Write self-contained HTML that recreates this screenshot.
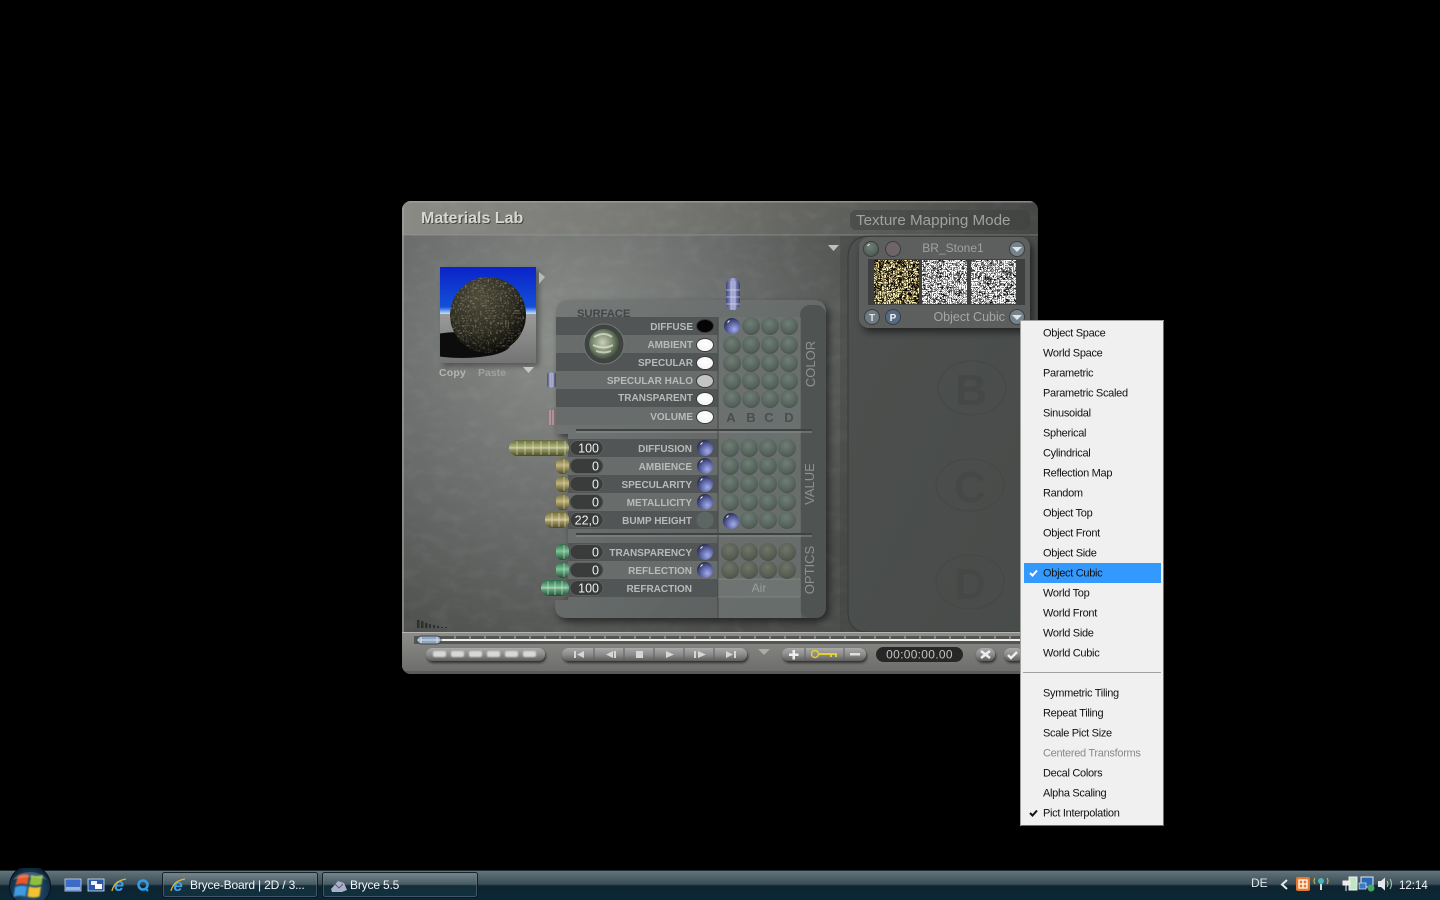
<!DOCTYPE html>
<html><head><meta charset="utf-8"><title>Bryce 5.5</title>
<style>html,body{margin:0;padding:0;background:#000;width:1440px;height:900px;overflow:hidden}svg{display:block}
text{font-family:"Liberation Sans",sans-serif}
.l{font-weight:bold;font-size:10px;fill:#b8bbb9;text-anchor:end}
.n{font-size:12.5px;fill:#f0f0f0;text-anchor:end}
.m{font-size:11px;letter-spacing:-.3px;fill:#111}
.t{font-size:12px;letter-spacing:-.17px;fill:#f2f6f8}
</style></head><body>
<svg width="1440" height="900" viewBox="0 0 1440 900" xmlns="http://www.w3.org/2000/svg">
<defs>
<radialGradient id="body" gradientUnits="userSpaceOnUse" cx="560" cy="340" r="340"><stop offset="0" stop-color="#8b8e8b"/><stop offset=".5" stop-color="#6c6f6d"/><stop offset="1" stop-color="#4c4e4c"/></radialGradient>
<linearGradient id="head" x1="0" x2="1" y1="0" y2="0"><stop offset="0" stop-color="#8a8a85"/><stop offset=".4" stop-color="#777874"/><stop offset="1" stop-color="#454744"/></linearGradient>
<linearGradient id="surf" x1="0" x2="1" y1="0" y2="1"><stop offset="0" stop-color="#757978"/><stop offset="1" stop-color="#585c5b"/></linearGradient>
<linearGradient id="rp" x1="0" x2="1" y1="0" y2="1"><stop offset="0" stop-color="#4d504e"/><stop offset="1" stop-color="#484b49"/></linearGradient>
<linearGradient id="bar" x1="0" x2="0" y1="0" y2="1"><stop offset="0" stop-color="#8d8d8a"/><stop offset="1" stop-color="#6b6b69"/></linearGradient>
<linearGradient id="cap" x1="0" x2="0" y1="0" y2="1"><stop offset="0" stop-color="#a9aaa9"/><stop offset=".5" stop-color="#8b8c8b"/><stop offset="1" stop-color="#5d5e5d"/></linearGradient>
<linearGradient id="sky" x1="0" x2="0" y1="0" y2="1"><stop offset="0" stop-color="#0a23c8"/><stop offset=".85" stop-color="#1450d8"/><stop offset="1" stop-color="#bfe4ff"/></linearGradient>
<linearGradient id="gnd" x1="0" x2="0" y1="0" y2="1"><stop offset="0" stop-color="#9a9a9a"/><stop offset="1" stop-color="#747474"/></linearGradient>
<radialGradient id="sph" cx=".38" cy=".28" r=".8"><stop offset="0" stop-color="#4e4b3a"/><stop offset=".55" stop-color="#2e2d22"/><stop offset="1" stop-color="#040403"/></radialGradient>
<radialGradient id="sd" cx=".45" cy=".35" r=".7"><stop offset="0" stop-color="#6f7e76"/><stop offset=".7" stop-color="#56635c"/><stop offset="1" stop-color="#484f4c"/></radialGradient>
<radialGradient id="sd2" cx=".45" cy=".35" r=".7"><stop offset="0" stop-color="#70756a"/><stop offset=".7" stop-color="#585c52"/><stop offset="1" stop-color="#494c45"/></radialGradient>
<radialGradient id="bd" cx=".65" cy=".7" r=".8"><stop offset="0" stop-color="#a3acea"/><stop offset=".55" stop-color="#565e9c"/><stop offset="1" stop-color="#1d2036"/></radialGradient>
<radialGradient id="wh" cx=".5" cy=".4" r=".7"><stop offset="0" stop-color="#fff"/><stop offset=".8" stop-color="#f4f4f4"/><stop offset="1" stop-color="#bbb"/></radialGradient>
<radialGradient id="gb" cx=".45" cy=".45" r=".6"><stop offset="0" stop-color="#c9d0b8"/><stop offset=".55" stop-color="#7c8c70"/><stop offset="1" stop-color="#344034"/></radialGradient>
<linearGradient id="gold" x1="0" x2="0" y1="0" y2="1"><stop offset="0" stop-color="#6f6a3a"/><stop offset=".45" stop-color="#c2b67c"/><stop offset="1" stop-color="#4d4824"/></linearGradient>
<linearGradient id="green" x1="0" x2="0" y1="0" y2="1"><stop offset="0" stop-color="#2c6a46"/><stop offset=".45" stop-color="#7cc49a"/><stop offset="1" stop-color="#1f4c32"/></linearGradient>
<linearGradient id="olive" x1="0" x2="0" y1="0" y2="1"><stop offset="0" stop-color="#62683a"/><stop offset=".45" stop-color="#b5b97e"/><stop offset="1" stop-color="#474a22"/></linearGradient>
<linearGradient id="bluec" x1="0" x2="1" y1="0" y2="0"><stop offset="0" stop-color="#3f4678"/><stop offset=".5" stop-color="#a9aee0"/><stop offset="1" stop-color="#3b3f6a"/></linearGradient>
<linearGradient id="tb" x1="0" x2="0" y1="0" y2="1"><stop offset="0" stop-color="#6e7f85"/><stop offset=".1" stop-color="#5b6d74"/><stop offset=".47" stop-color="#3a4e58"/><stop offset=".53" stop-color="#0e2430"/><stop offset="1" stop-color="#0b2735"/></linearGradient>
<linearGradient id="tbb" x1="0" x2="0" y1="0" y2="1"><stop offset="0" stop-color="#7d8d92"/><stop offset=".48" stop-color="#4a5c65"/><stop offset=".52" stop-color="#16303c"/><stop offset="1" stop-color="#123242"/></linearGradient>
<radialGradient id="orb" cx=".5" cy=".6" r=".6"><stop offset="0" stop-color="#2f5a7c"/><stop offset=".8" stop-color="#12324a"/><stop offset="1" stop-color="#0a1a26"/></radialGradient>
<filter id="stone" x="0" y="0" width="100%" height="100%"><feTurbulence type="fractalNoise" baseFrequency=".06 .09" numOctaves="4" seed="7"/><feColorMatrix values="0 0 0 0 1  0 0 0 0 1  0 0 0 0 1  1.6 0 0 0 -.72"/></filter>
<filter id="tex1" x="0" y="0" width="100%" height="100%"><feTurbulence type="turbulence" baseFrequency=".45" numOctaves="2" seed="3"/><feColorMatrix values="4 0 0 0 -.72  3.500 0 0 0 -.65  1.800 0 0 0 -.36  0 0 0 0 1"/></filter>
<filter id="tex2" x="0" y="0" width="100%" height="100%"><feTurbulence type="turbulence" baseFrequency=".5" numOctaves="2" seed="3"/><feColorMatrix values="9 0 0 0 -1.4  9 0 0 0 -1.4  9 0 0 0 -1.4  0 0 0 0 1"/></filter>
<filter id="spk" x="0" y="0" width="100%" height="100%"><feTurbulence type="turbulence" baseFrequency=".4" numOctaves="2" seed="5"/><feColorMatrix values="0 0 0 0 .85  0 0 0 0 .8  0 0 0 0 .55  3 0 0 0 -.75"/></filter>
<filter id="sh" x="-10%" y="-10%" width="125%" height="125%"><feDropShadow dx="3" dy="4" stdDeviation="4" flood-color="#000" flood-opacity=".55"/></filter>
<filter id="sh2" x="-10%" y="-30%" width="125%" height="180%"><feDropShadow dx="1" dy="2" stdDeviation="1.2" flood-color="#000" flood-opacity=".6"/></filter>
<filter id="blur"><feGaussianBlur stdDeviation="3"/></filter>
<filter id="soft"><feGaussianBlur stdDeviation=".7"/></filter>
<clipPath id="pc"><rect x="402" y="201" width="636" height="473" rx="9"/></clipPath>
<clipPath id="sc"><rect x="440" y="267" width="96" height="96"/></clipPath>
<clipPath id="sphc"><circle cx="488" cy="315" r="38"/></clipPath>
<clipPath id="orbc"><rect x="0" y="868" width="60" height="32"/></clipPath>
<g id="s"><circle r="9" fill="url(#sd)"/></g>
<g id="o"><circle r="9" fill="url(#sd2)"/></g>
<g id="b"><circle r="8" fill="url(#bd)"/><path d="M-4.500-3.500-2.500-5.500" stroke="#fff" stroke-width="1"/></g>
<g id="w"><ellipse rx="8.500" ry="6.500" fill="url(#wh)" stroke="#3a3c3b"/></g>
<g id="f"><rect x="-33" y="-7.500" width="33" height="15" rx="7.500" fill="#3a3c3c" stroke="#5e605f"/></g>
<g id="ib"><circle r="7.500" fill="url(#sd)" stroke="#3a3e3c"/><path d="M-3.500-3-1.500-5" stroke="#fff"/></g>
</defs>

<rect width="1440" height="900" fill="#000"/>

<!-- window -->
<g clip-path="url(#pc)">
<rect x="402" y="201" width="636" height="473" fill="url(#body)"/>
<rect x="402" y="201" width="636" height="473" filter="url(#stone)" opacity=".07"/>
<rect x="402" y="201" width="636" height="34" fill="url(#head)"/>
<rect x="402" y="201" width="636" height="34" filter="url(#stone)" opacity=".07"/>
<rect x="402" y="201" width="636" height="1.500" fill="#a5a5a2" opacity=".7"/>
<rect x="402" y="234.500" width="636" height="1" fill="#9a9c99" opacity=".6"/>
<rect x="402" y="201" width="2" height="473" fill="#a3a4a1" opacity=".6"/>
<rect x="840" y="236" width="198" height="400" fill="#3f413f" opacity=".35"/>
<!-- right panel -->
<path d="M1038 236H870Q848 236 848 258V612Q848 632 868 632H1038Z" fill="url(#rp)" stroke="#383a39"/>
<!-- embossed letters -->
<g fill="none" stroke="#444745" stroke-width="1"><ellipse cx="972" cy="388" rx="34" ry="27"/><ellipse cx="970" cy="485" rx="34" ry="26"/><ellipse cx="970" cy="582" rx="34" ry="27"/></g>
<g font-size="44" font-weight="bold" fill="#454846" text-anchor="middle"><text x="971" y="405">B</text><text x="970" y="502">C</text><text x="970" y="599">D</text></g>
<!-- bottom bar -->
<rect x="402" y="632" width="636" height="42" fill="url(#bar)"/>
<rect x="402" y="632" width="636" height="1" fill="#b4b4b0"/>
<rect x="402" y="671" width="636" height="3" fill="#5a5a58"/>
</g>

<!-- title -->
<text x="421" y="223" font-size="16" font-weight="bold" fill="#2a2a28" opacity=".7" transform="translate(1 1)">Materials Lab</text>
<text x="421" y="223" font-size="16" font-weight="bold" fill="#d8d8d2">Materials Lab</text>
<rect x="850" y="210" width="180" height="20" rx="6" fill="#3f413f" opacity=".55"/>
<text x="856" y="225" font-size="15.200" fill="#a0a29e">Texture Mapping Mode</text>
<path d="M828 245h11l-5.500 6z" fill="#bfc1bd"/>

<!-- preview -->
<rect x="443" y="270" width="96" height="96" fill="#000" opacity=".35" filter="url(#blur)"/>
<g clip-path="url(#sc)">
<rect x="440" y="267" width="96" height="47" fill="url(#sky)"/>
<rect x="440" y="314" width="96" height="49" fill="url(#gnd)"/>
<ellipse cx="462" cy="345" rx="48" ry="13" fill="#0c0c0c"/>
</g>
<circle cx="488" cy="315" r="38" fill="url(#sph)"/>
<rect x="450" y="277" width="76" height="76" filter="url(#spk)" clip-path="url(#sphc)" opacity=".3"/>
<path d="M539 272l6 5-6 7z" fill="#b8bab6"/>
<path d="M523 367h11l-5.500 6z" fill="#c6c8c4"/>
<text x="439" y="376" font-size="10.500" font-weight="bold" fill="#b4b6b2" letter-spacing=".2">Copy</text>
<text x="478" y="376" font-size="10.500" font-weight="bold" fill="#a0a29e">Paste</text>

<!-- small knobs -->
<rect x="547" y="372" width="9" height="16" rx="3" fill="url(#bluec)" opacity=".8"/>
<rect x="547" y="409" width="9" height="17" rx="3" fill="#8f7478"/>
<path d="M550 373v14M553 373v14M550 410v15M553 410v15" stroke="#ddd" stroke-width=".7"/>

<!-- surface panel with notch on the left for sliders -->
<path d="M569 300H813Q826 300 826 313V605Q826 618 813 618H568Q555 618 555 606V600H568V434H556V313Q556 300 569 300Z" fill="url(#surf)" filter="url(#sh)"/>
<rect x="800" y="305" width="26" height="313" rx="10" fill="#4f5352"/>
<rect x="718" y="317" width="83" height="301" fill="#6f7674" opacity=".6"/>
<!-- rows -->
<g fill="#525556">
<rect x="556" y="317" width="162" height="18"/><rect x="556" y="353" width="162" height="18"/><rect x="556" y="389" width="162" height="18"/>
<rect x="568" y="439" width="150" height="18"/><rect x="568" y="475" width="150" height="18"/><rect x="568" y="511" width="150" height="18"/>
<rect x="568" y="543" width="150" height="18"/><rect x="568" y="579" width="150" height="18"/>
</g>
<g fill="#686c6b">
<rect x="556" y="335" width="162" height="18"/><rect x="556" y="371" width="162" height="18"/><rect x="556" y="407" width="162" height="18"/>
<rect x="568" y="457" width="150" height="18"/><rect x="568" y="493" width="150" height="18"/><rect x="568" y="561" width="150" height="18"/>
</g>
<path d="M576 430H812M576 534H812" stroke="#3e4241" stroke-width="2"/>
<path d="M576 432H812M576 536H812" stroke="#8a8e8c"/>
<path d="M718 317V618" stroke="#444846"/>
<rect x="718" y="579" width="83" height="18" fill="#7a807e" opacity=".35"/>
<path d="M718 579H800M718 597H800" stroke="#8b908e" opacity=".6"/>

<text x="577" y="317" font-size="11.300" font-weight="bold" fill="#3d403f" opacity=".9" letter-spacing="-.1">SURFACE</text>
<!-- surface ball -->
<circle cx="604" cy="344" r="20" fill="#3f4342" stroke="#737775" stroke-width="1"/>
<circle cx="604" cy="344" r="15" fill="url(#gb)"/>
<path d="M594 337q10-6 18 0M593 345q11 5 20 0M596 351q8 3 15 0" stroke="#e4e6da" stroke-width="2" fill="none" opacity=".7"/>

<!-- surface labels -->
<text class="l" x="693" y="330">DIFFUSE</text>
<text class="l" x="693" y="348">AMBIENT</text>
<text class="l" x="693" y="366">SPECULAR</text>
<text class="l" x="693" y="384">SPECULAR HALO</text>
<text class="l" x="693" y="401">TRANSPARENT</text>
<text class="l" x="693" y="420">VOLUME</text>
<ellipse cx="705" cy="326" rx="8.500" ry="6.500" fill="#050505" stroke="#3a3c3b"/>
<use href="#w" x="705" y="345"/><use href="#w" x="705" y="363"/>
<ellipse cx="705" cy="381" rx="8.500" ry="6.500" fill="#c4c4c2" stroke="#3a3c3b"/>
<use href="#w" x="705" y="399"/><use href="#w" x="705" y="417"/>

<!-- colour matrix -->
<use href="#b" x="732" y="326"/><use href="#s" x="751" y="326"/><use href="#s" x="770" y="326"/><use href="#s" x="789" y="326"/>
<use href="#s" x="732" y="345"/><use href="#s" x="751" y="345"/><use href="#s" x="770" y="345"/><use href="#s" x="789" y="345"/>
<use href="#s" x="732" y="363"/><use href="#s" x="751" y="363"/><use href="#s" x="770" y="363"/><use href="#s" x="789" y="363"/>
<use href="#s" x="732" y="381"/><use href="#s" x="751" y="381"/><use href="#s" x="770" y="381"/><use href="#s" x="789" y="381"/>
<use href="#s" x="732" y="399"/><use href="#s" x="751" y="399"/><use href="#s" x="770" y="399"/><use href="#s" x="789" y="399"/>
<g font-size="13" font-weight="bold" fill="#4a4e4d" text-anchor="middle"><text x="731" y="422">A</text><text x="751" y="422">B</text><text x="769" y="422">C</text><text x="789" y="422">D</text></g>
<!-- value matrix -->
<use href="#s" x="730" y="448"/><use href="#s" x="749" y="448"/><use href="#s" x="768" y="448"/><use href="#s" x="787" y="448"/>
<use href="#s" x="730" y="466"/><use href="#s" x="749" y="466"/><use href="#s" x="768" y="466"/><use href="#s" x="787" y="466"/>
<use href="#s" x="730" y="484"/><use href="#s" x="749" y="484"/><use href="#s" x="768" y="484"/><use href="#s" x="787" y="484"/>
<use href="#s" x="730" y="502"/><use href="#s" x="749" y="502"/><use href="#s" x="768" y="502"/><use href="#s" x="787" y="502"/>
<use href="#b" x="731" y="521"/><use href="#s" x="749" y="520"/><use href="#s" x="768" y="520"/><use href="#s" x="787" y="520"/>
<!-- optics matrix -->
<use href="#o" x="730" y="552"/><use href="#o" x="749" y="552"/><use href="#o" x="768" y="552"/><use href="#o" x="787" y="552"/>
<use href="#o" x="730" y="570"/><use href="#o" x="749" y="570"/><use href="#o" x="768" y="570"/><use href="#o" x="787" y="570"/>
<text x="759" y="592" font-size="12" fill="#9a9e9c" text-anchor="middle">Air</text>

<g font-size="13" fill="#8d918f" text-anchor="middle">
<text transform="translate(815 364) rotate(-90)">COLOR</text>
<text transform="translate(814 484) rotate(-90)">VALUE</text>
<text transform="translate(814 570) rotate(-90)">OPTICS</text>
</g>

<!-- sliders -->
<rect x="509" y="440" width="60" height="16" rx="8" fill="url(#olive)"/>
<rect x="556" y="458" width="13" height="16" rx="6" fill="url(#gold)"/>
<rect x="556" y="476" width="13" height="16" rx="6" fill="url(#gold)"/>
<rect x="556" y="494" width="13" height="16" rx="6" fill="url(#gold)"/>
<rect x="545" y="512" width="24" height="16" rx="7" fill="url(#gold)"/>
<rect x="556" y="544" width="13" height="16" rx="6" fill="url(#green)"/>
<rect x="556" y="562" width="13" height="16" rx="6" fill="url(#green)"/>
<rect x="541" y="580" width="28" height="16" rx="8" fill="url(#green)"/>
<path d="M509 448H567M517 441v14M525 441v14M533 441v14M541 441v14M549 441v14M557 441v14M565 441v14M545 520H567M552 513v14M559 513v14M565 513v14M541 588H567M548 581v14M555 581v14M562 581v14M564 459v14M564 477v14M564 495v14M564 545v14M564 563v14" stroke="#e8e8d8" stroke-width=".7" opacity=".8"/>

<!-- number fields -->
<use href="#f" x="603" y="448"/><use href="#f" x="603" y="466"/><use href="#f" x="603" y="484"/><use href="#f" x="603" y="502"/><use href="#f" x="603" y="520"/><use href="#f" x="603" y="552"/><use href="#f" x="603" y="570"/><use href="#f" x="603" y="588"/>
<text class="n" x="599" y="452.500">100</text><text class="n" x="599" y="470.500">0</text><text class="n" x="599" y="488.500">0</text><text class="n" x="599" y="506.500">0</text><text class="n" x="599" y="524.500">22,0</text><text class="n" x="599" y="556.500">0</text><text class="n" x="599" y="574.500">0</text><text class="n" x="599" y="592.500">100</text>

<text class="l" x="692" y="452">DIFFUSION</text>
<text class="l" x="692" y="470">AMBIENCE</text>
<text class="l" x="692" y="488">SPECULARITY</text>
<text class="l" x="692" y="506">METALLICITY</text>
<text class="l" x="692" y="524">BUMP HEIGHT</text>
<text class="l" x="692" y="556">TRANSPARENCY</text>
<text class="l" x="692" y="574">REFLECTION</text>
<text class="l" x="692" y="592">REFRACTION</text>
<use href="#b" x="705" y="448"/><use href="#b" x="705" y="466"/><use href="#b" x="705" y="484"/><use href="#b" x="705" y="502"/><circle cx="705" cy="520" r="8.500" fill="#5c6662"/><use href="#b" x="705" y="552"/><use href="#b" x="705" y="570"/>

<!-- activity meter -->
<g fill="#2e302e"><rect x="417" y="620" width="2.500" height="8"/><rect x="421" y="621" width="2.500" height="7"/><rect x="425" y="623" width="2.500" height="5"/><rect x="429" y="624" width="2" height="4"/><rect x="433" y="625" width="2" height="3"/><rect x="437" y="626" width="2" height="2"/><rect x="441" y="627" width="2" height="1"/><rect x="445" y="627" width="2" height="1"/></g>

<!-- right header card -->
<rect x="859" y="237" width="171" height="91" rx="10" fill="#5c5f5d" filter="url(#sh)"/>
<rect x="868" y="259" width="157" height="46" fill="#3d403e"/>
<text x="953" y="252" font-size="12" fill="#9fa3a0" text-anchor="middle">BR_Stone1</text>
<text x="1005" y="321" font-size="12.500" fill="#a4a8a5" text-anchor="end">Object Cubic</text>
<rect x="874" y="260" width="45" height="44" filter="url(#tex1)"/>
<rect x="922" y="260" width="45" height="44" filter="url(#tex2)"/>
<rect x="971" y="260" width="45" height="44" filter="url(#tex2)"/>
<use href="#ib" x="871" y="249"/>
<circle cx="893" cy="249" r="7.500" fill="#6f6467" stroke="#3a3e3c"/>
<circle cx="1017" cy="249" r="7.500" fill="#76838c" stroke="#3a3e3c"/><path d="M1012 247h10l-5 5z" fill="#e0e4e6"/>
<circle cx="872" cy="317" r="7.500" fill="#6e7b82" stroke="#3a3e3c"/><text x="872" y="321" font-size="10" font-weight="bold" fill="#dfe2e4" text-anchor="middle">T</text>
<circle cx="893" cy="317" r="7.500" fill="#566a88" stroke="#3a3e3c"/><text x="893" y="321" font-size="10" font-weight="bold" fill="#eef0f2" text-anchor="middle">P</text>
<circle cx="1017" cy="317" r="7.500" fill="#76838c" stroke="#3a3e3c"/><path d="M1012 315h10l-5 5z" fill="#e0e4e6"/>

<!-- top bar capsule -->
<rect x="726" y="278" width="14" height="32" rx="7" fill="url(#bluec)"/>
<path d="M726 290H740M726 297H740M726 304H740M731 281v29M735 281v29" stroke="#e5e5f2" stroke-width=".7" opacity=".8"/>

<!-- timeline -->
<rect x="414" y="636" width="606" height="8" fill="#555654"/>
<rect x="440" y="639" width="580" height="2" fill="#f2f2f0"/>
<path d="M455 636v4M470 636v4M485 636v4M500 636v4M515 636v4M530 636v4M545 636v4M560 636v4M575 636v4M590 636v4M605 636v4M620 636v4M635 636v4M650 636v4M665 636v4M680 636v4M695 636v4M710 636v4M725 636v4M740 636v4M755 636v4M770 636v4M785 636v4M800 636v4M815 636v4M830 636v4M845 636v4M860 636v4M875 636v4M890 636v4M905 636v4M920 636v4M935 636v4M950 636v4M965 636v4M980 636v4M995 636v4M1010 636v4" stroke="#d4d4d0" stroke-width=".8"/>
<rect x="417" y="636" width="24" height="8" rx="4" fill="#8fa7c4" stroke="#444"/>
<path d="M421 637v6M437 637v6M417 640h24" stroke="#f0f4fa" stroke-width=".8"/>

<!-- bottom controls -->
<g filter="url(#sh2)">
<rect x="426" y="648" width="119" height="13" rx="6.500" fill="url(#cap)"/>
<rect x="562" y="648" width="185" height="13" rx="6.500" fill="url(#cap)"/>
<rect x="782" y="648" width="84" height="13" rx="6.500" fill="url(#cap)"/>
<rect x="976" y="648" width="19" height="13" rx="6.500" fill="url(#cap)"/>
<rect x="1004" y="648" width="19" height="13" rx="6.500" fill="url(#cap)"/>
</g>
<g fill="#d8d8d6" filter="url(#soft)"><rect x="433" y="651" width="13" height="6" rx="2"/><rect x="451" y="651" width="13" height="6" rx="2"/><rect x="469" y="651" width="13" height="6" rx="2"/><rect x="487" y="651" width="13" height="6" rx="2"/><rect x="505" y="651" width="13" height="6" rx="2"/><rect x="523" y="651" width="13" height="6" rx="2"/></g>
<path d="M594 648v13M624 648v13M654 648v13M684 648v13M714 648v13M805 648v13M844 648v13" stroke="#5f605f"/>
<g fill="#d6d6d4">
<path d="M574 651h2v7h-2zM584 651v7l-7-3.500z"/>
<path d="M606 654.500l7-3.500v7zM614 651h2v7h-2z"/>
<rect x="636" y="651" width="7" height="7"/>
<path d="M666 651l8 3.500-8 3.500z"/>
<path d="M694 651h2v7h-2zM698 651l8 3.500-8 3.500z"/>
<path d="M726 651l7 3.500-7 3.500zM734 651h2v7h-2z"/>
<path d="M758 649h12l-6 6z" fill="#a9aba8"/>
<path d="M789 653.500h3.500V650h2.500v3.500h3.500V656H795v3.500h-2.500V656H789z" fill="#eee"/>
<rect x="850" y="653" width="10" height="2.500" fill="#e0e0de"/>
<path d="M981 651l9 7M990 651l-9 7" stroke="#eee" stroke-width="2.500"/>
<path d="M1008 655l3 3 6-6" stroke="#eee" stroke-width="2.500" fill="none"/>
</g>
<circle cx="815" cy="654" r="3.500" fill="none" stroke="#e4d030" stroke-width="1.500"/>
<path d="M819 654h17v3M831 654v3" stroke="#e4d030" stroke-width="2" fill="none"/>
<rect x="876" y="647" width="87" height="15" rx="7.500" fill="#262726"/>
<text x="919.500" y="658.500" font-size="12" fill="#c2c4c2" text-anchor="middle" letter-spacing=".3">00:00:00.00</text>

<!-- context menu -->
<rect x="1020" y="320" width="144" height="506" fill="#f0f0f0"/>
<rect x="1020.500" y="320.500" width="143" height="505" fill="none" stroke="#a0a0a0"/>
<path d="M1163.500 321V826M1021 825.500H1164" stroke="#6c6c6c"/>
<rect x="1024" y="563" width="137" height="20" fill="#3399ff"/>
<path d="M1023 672.500H1161" stroke="#a0a0a0"/>
<g>
<text class="m" x="1043" y="336.500">Object Space</text>
<text class="m" x="1043" y="356.500">World Space</text>
<text class="m" x="1043" y="376.500">Parametric</text>
<text class="m" x="1043" y="396.500">Parametric Scaled</text>
<text class="m" x="1043" y="416.500">Sinusoidal</text>
<text class="m" x="1043" y="436.500">Spherical</text>
<text class="m" x="1043" y="456.500">Cylindrical</text>
<text class="m" x="1043" y="476.500">Reflection Map</text>
<text class="m" x="1043" y="496.500">Random</text>
<text class="m" x="1043" y="516.500">Object Top</text>
<text class="m" x="1043" y="536.500">Object Front</text>
<text class="m" x="1043" y="556.500">Object Side</text>
<text class="m" x="1043" y="576.500">Object Cubic</text>
<text class="m" x="1043" y="596.500">World Top</text>
<text class="m" x="1043" y="616.500">World Front</text>
<text class="m" x="1043" y="636.500">World Side</text>
<text class="m" x="1043" y="656.500">World Cubic</text>
<text class="m" x="1043" y="696.500">Symmetric Tiling</text>
<text class="m" x="1043" y="716.500">Repeat Tiling</text>
<text class="m" x="1043" y="736.500">Scale Pict Size</text>
<text class="m" x="1043" y="756.500" style="fill:#8a8a8a">Centered Transforms</text>
<text class="m" x="1043" y="776.500">Decal Colors</text>
<text class="m" x="1043" y="796.500">Alpha Scaling</text>
<text class="m" x="1043" y="816.500">Pict Interpolation</text>
</g>
<path d="M1030 573l2.500 2.500 4.500-5" stroke="#fff" stroke-width="2" fill="none"/>
<path d="M1030 813l2.500 2.500 4.500-5" stroke="#111" stroke-width="2" fill="none"/>

<!-- taskbar -->
<rect x="0" y="870" width="1440" height="30" fill="url(#tb)"/>
<rect x="0" y="870" width="1440" height="1" fill="#1e2a30"/>
<rect x="162.500" y="872.500" width="155" height="25" rx="2" fill="url(#tbb)" stroke="#0a1820" opacity=".85"/>
<rect x="322.500" y="872.500" width="155" height="25" rx="2" fill="url(#tbb)" stroke="#0a1820" opacity=".85"/>
<rect x="163.500" y="873.500" width="153" height="23" rx="2" fill="none" stroke="#6c7e86" opacity=".5"/>
<rect x="323.500" y="873.500" width="153" height="23" rx="2" fill="none" stroke="#6c7e86" opacity=".5"/>
<g clip-path="url(#orbc)">
<circle cx="30" cy="886" r="20.500" fill="url(#orb)" stroke="#0a1218"/>
<g filter="url(#soft)">
<path d="M18 876q6-3 11-1l-1.500 9.500q-6-2-12 .5z" fill="#e8572a"/>
<path d="M31 875q6 2 12 0l-1.500 9.500q-6 2-12 0z" fill="#8ec040"/>
<path d="M15 887q6-2.500 12-.5l-1.500 10q-6-2-12 .5z" fill="#3f9ae0"/>
<path d="M29 886.500q6 2 12 0l-1.500 10q-6 2-12 0z" fill="#f2c230"/>
</g>
<path d="M13 880a18 12 0 0 1 34 0q-17-5-34 0z" fill="#fff" opacity=".18"/>
</g>
<!-- quick launch -->
<rect x="65" y="879" width="16" height="12" fill="#3c6cc8" stroke="#cfd8e4" stroke-width=".8"/><rect x="66" y="887" width="14" height="3" fill="#9ab6d8"/>
<rect x="88" y="879" width="16" height="12" fill="#2a5aa8" stroke="#dfe6ee" stroke-width=".8"/><rect x="91" y="881" width="6" height="4" fill="#eef"/><rect x="95" y="884" width="7" height="5" fill="#fff"/>
<text x="119" y="891" font-size="18" font-style="italic" font-weight="bold" fill="#3aa0e8" text-anchor="middle">e</text>
<path d="M112 891q2-10 14-12" stroke="#e8b830" stroke-width="1.300" fill="none"/>
<circle cx="143" cy="885" r="4.500" fill="none" stroke="#2f9fe8" stroke-width="2.500"/><path d="M145 888l3 3" stroke="#2f9fe8" stroke-width="2"/>
<text x="178" y="891" font-size="17" font-style="italic" font-weight="bold" fill="#3aa0e8" text-anchor="middle">e</text>
<path d="M171 891q2-10 14-12" stroke="#e8b830" stroke-width="1.200" fill="none"/>
<path d="M331 889l7-8 6 2 3 7-5 2h-10z" fill="#aab0c8"/><path d="M335 884l4 4 4-4" stroke="#5a5f80" fill="none"/>
<text class="t" x="190" y="889">Bryce-Board | 2D / 3...</text>
<text class="t" x="350" y="889">Bryce 5.5</text>
<!-- tray -->
<text x="1251" y="887" font-size="12" fill="#dfe6ea">DE</text>
<path d="M1287 880l-5 4.500 5 4.500" stroke="#e6eaec" stroke-width="2" fill="none"/>
<rect x="1296" y="877" width="14" height="14" rx="2" fill="#e8792a"/><path d="M1299 880h8v8h-8zM1299 884h8M1303 880v8" stroke="#fff" stroke-width="1.300" fill="none"/>
<circle cx="1321" cy="881" r="3" fill="#48b8c0"/><path d="M1321 884v6" stroke="#d8dcdc" stroke-width="2"/><path d="M1315 878q-2 3 0 6M1327 878q2 3 0 6" stroke="#d8c040" fill="none"/>
<rect x="1349" y="877" width="8" height="13" fill="#bfe6c0" stroke="#eef"/><path d="M1343 881h7v4h-7zM1346 885v6" fill="#eee" stroke="#eee"/>
<rect x="1361" y="877" width="12" height="10" fill="#2a68b8" stroke="#e4ecf4"/><circle cx="1371" cy="888" r="3.500" fill="#48a860"/><rect x="1359" y="883" width="7" height="6" fill="#3a78c8" stroke="#e4ecf4" stroke-width=".7"/>
<path d="M1378 881h3l4-3.500v13l-4-3.500h-3z" fill="#e4e8ea"/><path d="M1387 881q2 3 0 6M1390 879q3 5 0 10" stroke="#a8d8b0" fill="none"/>
<text x="1399" y="889" font-size="11.500" fill="#f0f4f6">12:14</text>
</svg>
</body></html>
